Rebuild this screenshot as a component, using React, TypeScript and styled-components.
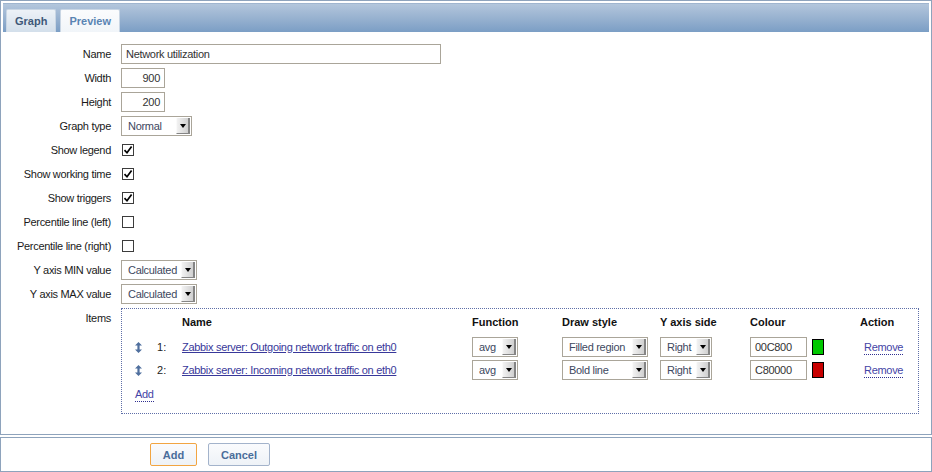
import React from "react";
import styled, { createGlobalStyle } from "styled-components";

const GlobalStyle = createGlobalStyle`
  body {
    margin: 0;
    background: #ffffff;
    font-family: "Liberation Sans", Arial, sans-serif;
    font-size: 11px;
    color: #1a1a1a;
  }
`;

const Page = styled.div`
  width: 932px;
  height: 472px;
  box-sizing: border-box;
`;

const Panel = styled.div`
  height: 435px;
  box-sizing: border-box;
  border: 1px solid #8ea3bc;
  padding: 2px;
`;

const TabBar = styled.div`
  height: 29px;
  box-sizing: border-box;
  padding-left: 3px;
  display: flex;
  align-items: flex-end;
  gap: 4px;
  background: linear-gradient(to bottom, #b3c6dc 0%, #98b2d0 50%, #7b9ec5 100%);
  border-top: 1px solid #9fb5cf;
`;

const Tab = styled.div<{ $active?: boolean }>`
  height: 23px;
  box-sizing: border-box;
  padding: 0 8px;
  display: flex;
  align-items: center;
  font-weight: bold;
  font-size: 11px;
  border: 1px solid #c9d6e4;
  border-bottom: none;
  border-radius: 2px 2px 0 0;
  color: ${(p) => (p.$active ? "#3e5878" : "#5a84b3")};
  background: ${(p) =>
    p.$active
      ? "linear-gradient(to bottom, #edf2f7, #d3dfeb)"
      : "linear-gradient(to bottom, #fbfcfd, #f1f5f9)"};
`;

const Form = styled.div`
  display: grid;
  grid-template-columns: 108px 1fr;
  column-gap: 10px;
  row-gap: 4px;
  padding: 12px 10px 0 0;
`;

const Label = styled.div`
  text-align: right;
  line-height: 20px;
  height: 20px;
  letter-spacing: -0.3px;
  white-space: nowrap;
`;

const Field = styled.div`
  display: flex;
  align-items: center;
  min-height: 20px;
`;

const TextInput = styled.div<{ $w: number; $right?: boolean }>`
  width: ${(p) => p.$w}px;
  height: 20px;
  box-sizing: border-box;
  border: 1px solid #aaa599;
  background: #fff;
  color: #333;
  line-height: 18px;
  padding: 0 4px;
  text-align: ${(p) => (p.$right ? "right" : "left")};
  letter-spacing: -0.3px;
  white-space: nowrap;
  overflow: hidden;
`;

const SelectBox = styled.div<{ $w: number }>`
  width: ${(p) => p.$w}px;
  height: 20px;
  box-sizing: border-box;
  border: 1px solid #aaa599;
  background: #fff;
  display: flex;
  align-items: stretch;
  padding: 1px;
`;

const SelectValue = styled.div`
  flex: 1;
  color: #3d4860;
  line-height: 16px;
  padding-left: 5px;
  letter-spacing: -0.3px;
  white-space: nowrap;
  overflow: hidden;
`;

const SelectArrow = styled.div`
  width: 14px;
  box-sizing: border-box;
  background: linear-gradient(to right, #f2f2f2, #d0d0d0);
  border-left: 1px solid #fafafa;
  border-right: 2px solid #858585;
  border-bottom: 1px solid #858585;
  display: flex;
  align-items: center;
  justify-content: center;

  &::after {
    content: "";
    border-left: 3px solid transparent;
    border-right: 3px solid transparent;
    border-top: 4px solid #000;
  }
`;

const Check = styled.div`
  width: 12px;
  height: 12px;
  margin-left: 1px;
  box-sizing: border-box;
  border: 1px solid #3c3c3c;
  background: #fff;
  display: flex;
  align-items: center;
  justify-content: center;
`;

const ItemsBox = styled.div`
  border: 1px dotted #5f6fa8;
  padding: 5px 0 12px 9px;
`;

const COLS = "20px 31px 290px 90px 98px 90px 110px 1fr";

const ItemRow = styled.div<{ $top?: number; $h?: number }>`
  display: grid;
  grid-template-columns: ${COLS};
  align-items: center;
  height: ${(p) => p.$h ?? 20}px;
  margin-top: ${(p) => p.$top ?? 0}px;
`;

const HeadCell = styled.div`
  font-weight: bold;
  color: #111;
  white-space: nowrap;
`;

const DragCell = styled.div`
  padding-left: 4px;
  display: flex;
  align-items: center;
`;

const NumCell = styled.div`
  padding-left: 6px;
  color: #222;
`;

const ItemLink = styled.a`
  color: #38389a;
  text-decoration: underline;
  letter-spacing: -0.3px;
  white-space: nowrap;
  cursor: pointer;
`;

const DottedLink = styled.a<{ $indent?: number }>`
  color: #4444a6;
  text-decoration: none;
  border-bottom: 1px dotted #2f2f90;
  padding-bottom: 1px;
  margin-left: ${(p) => p.$indent ?? 0}px;
  letter-spacing: -0.3px;
  cursor: pointer;
`;

const ColourCell = styled.div`
  display: flex;
  align-items: center;
  gap: 5px;
`;

const Swatch = styled.div<{ $c: string }>`
  width: 12px;
  height: 16px;
  box-sizing: border-box;
  border: 1px solid #000;
  background: ${(p) => p.$c};
`;

const AddRow = styled.div`
  margin-top: 7px;
  padding-left: 4px;
  line-height: 14px;
`;

const Footer = styled.div`
  margin-top: 2px;
  height: 35px;
  box-sizing: border-box;
  border: 1px solid #8ea3bc;
  padding: 5px 0 0 149px;
  display: flex;
  gap: 11px;
`;

const Button = styled.button<{ $primary?: boolean; $w: number }>`
  width: ${(p) => p.$w}px;
  height: 23px;
  box-sizing: border-box;
  border: 1px solid ${(p) => (p.$primary ? "#f2a542" : "#a3b3cb")};
  border-radius: 2px;
  background: linear-gradient(to bottom, #fafbfd, #eef2f7);
  color: #4a6d9a;
  font-family: "Liberation Sans", Arial, sans-serif;
  font-size: 11px;
  font-weight: bold;
  padding: 0;
  cursor: pointer;
`;

const CheckMark = () => (
  <svg width="10" height="10" viewBox="0 0 10 10">
    <path d="M1.5 5.2 L4 7.8 L8.6 1.6" fill="none" stroke="#000" strokeWidth="1.7" />
  </svg>
);

const DragIcon = () => (
  <svg width="7" height="11" viewBox="0 0 7 11">
    <path d="M3.5 0 L7 3.5 L4.6 3.5 L4.6 7.5 L7 7.5 L3.5 11 L0 7.5 L2.4 7.5 L2.4 3.5 L0 3.5 Z" fill="#4f6f9e" />
  </svg>
);

const Select = ({ w, value }: { w: number; value: string }) => (
  <SelectBox $w={w}>
    <SelectValue>{value}</SelectValue>
    <SelectArrow />
  </SelectBox>
);

const items = [
  { n: 1, name: "Zabbix server: Outgoing network traffic on eth0", draw: "Filled region", colour: "00C800", c: "#00c800" },
  { n: 2, name: "Zabbix server: Incoming network traffic on eth0", draw: "Bold line", colour: "C80000", c: "#c80000" },
];

const checks = [
  { label: "Show legend", on: true },
  { label: "Show working time", on: true },
  { label: "Show triggers", on: true },
  { label: "Percentile line (left)", on: false },
  { label: "Percentile line (right)", on: false },
];

export default function App() {
  return (
    <Page>
      <GlobalStyle />
      <Panel>
        <TabBar>
          <Tab $active>Graph</Tab>
          <Tab>Preview</Tab>
        </TabBar>
        <Form>
          <Label>Name</Label>
          <Field>
            <TextInput $w={320}>Network utilization</TextInput>
          </Field>
          <Label>Width</Label>
          <Field>
            <TextInput $w={44} $right>900</TextInput>
          </Field>
          <Label>Height</Label>
          <Field>
            <TextInput $w={44} $right>200</TextInput>
          </Field>
          <Label>Graph type</Label>
          <Field>
            <Select w={71} value="Normal" />
          </Field>
          {checks.map((c) => (
            <React.Fragment key={c.label}>
              <Label>{c.label}</Label>
              <Field>
                <Check>{c.on && <CheckMark />}</Check>
              </Field>
            </React.Fragment>
          ))}
          <Label>Y axis MIN value</Label>
          <Field>
            <Select w={76} value="Calculated" />
          </Field>
          <Label>Y axis MAX value</Label>
          <Field>
            <Select w={76} value="Calculated" />
          </Field>
          <Label>Items</Label>
          <ItemsBox>
            <ItemRow $h={16}>
              <div />
              <div />
              <HeadCell>Name</HeadCell>
              <HeadCell>Function</HeadCell>
              <HeadCell>Draw style</HeadCell>
              <HeadCell>Y axis side</HeadCell>
              <HeadCell>Colour</HeadCell>
              <HeadCell>Action</HeadCell>
            </ItemRow>
            {items.map((it, i) => (
              <ItemRow key={it.n} $top={i === 0 ? 7 : 3}>
                <DragCell>
                  <DragIcon />
                </DragCell>
                <NumCell>{it.n}:</NumCell>
                <div>
                  <ItemLink>{it.name}</ItemLink>
                </div>
                <div>
                  <Select w={46} value="avg" />
                </div>
                <div>
                  <Select w={86} value={it.draw} />
                </div>
                <div>
                  <Select w={52} value="Right" />
                </div>
                <ColourCell>
                  <TextInput $w={57}>{it.colour}</TextInput>
                  <Swatch $c={it.c} />
                </ColourCell>
                <div>
                  <DottedLink $indent={4}>Remove</DottedLink>
                </div>
              </ItemRow>
            ))}
            <AddRow>
              <DottedLink>Add</DottedLink>
            </AddRow>
          </ItemsBox>
        </Form>
      </Panel>
      <Footer>
        <Button $primary $w={47}>Add</Button>
        <Button $w={62}>Cancel</Button>
      </Footer>
    </Page>
  );
}
